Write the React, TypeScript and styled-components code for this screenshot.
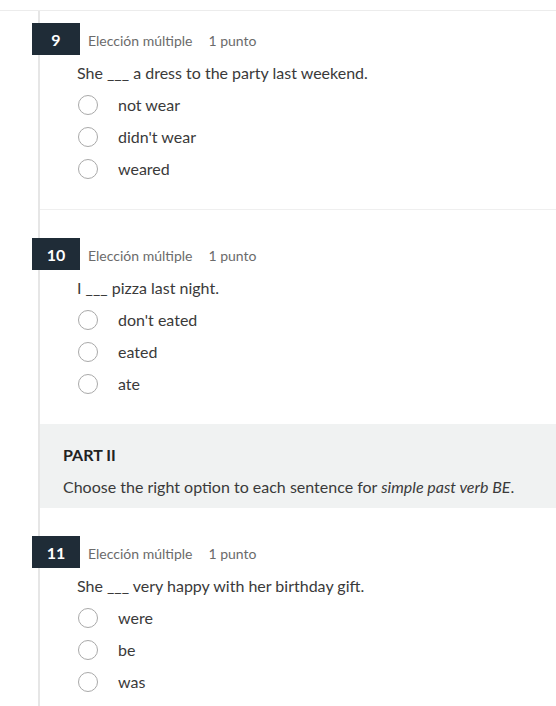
import React from "react";
import styled, { createGlobalStyle } from "styled-components";

const Global = createGlobalStyle`
  html, body { margin: 0; padding: 0; background: #fff; }
  body { font-family: Lato, "Open Sans", sans-serif; color: #333; }
  * { box-sizing: border-box; }
`;

const Page = styled.div`
  width: 556px;
  height: 706px;
  overflow: hidden;
  padding-top: 10px;
`;

const Frame = styled.div`
  border-top: 1px solid #ececec;
  padding-left: 38px;
`;

const Main = styled.div`
  border-left: 2px solid #e6e6e6;
  min-height: 700px;
`;

const Question = styled.section<{ $top: number; $sep?: boolean }>`
  padding: ${(p) => p.$top}px 0 24px 0;
  border-bottom: ${(p) => (p.$sep ? "1px solid #efefef" : "none")};
`;

const Header = styled.div`
  display: flex;
  align-items: center;
  height: 32px;
  margin-left: -8px;
`;

const Badge = styled.div`
  width: 48px;
  height: 32px;
  background: #1f2c37;
  color: #fff;
  font-weight: 700;
  font-size: 16px;
  display: flex;
  align-items: center;
  justify-content: center;
`;

const Meta = styled.span<{ $gap: number }>`
  font-size: 14px;
  color: #6b6b6b;
  margin-left: ${(p) => p.$gap}px;
  padding-top: 3px;
`;

const Prompt = styled.div`
  margin: 6px 0 0 37px;
  font-size: 16px;
  line-height: 24px;
  color: #3a3a3a;
`;

const Options = styled.div`
  margin-top: 4px;
  padding-left: 38px;
`;

const Option = styled.label`
  display: flex;
  align-items: center;
  height: 32px;
  font-size: 16px;
  color: #3a3a3a;
  padding-bottom: 1px;
`;

const Radio = styled.span`
  width: 20px;
  height: 20px;
  border-radius: 50%;
  border: 1px solid #a9a9a9;
  background: #fff;
  margin-right: 20px;
  flex: none;
`;

const Part = styled.div`
  background: #f0f2f2;
  padding: 19px 23px 9px 23px;
`;

const PartTitle = styled.div`
  font-weight: 700;
  font-size: 16px;
  line-height: 24px;
  color: #222;
  margin-bottom: 8px;
`;

const PartText = styled.div`
  font-size: 16px;
  line-height: 24px;
  color: #3a3a3a;
  em { font-style: italic; }
`;

type Q = { n: number; text: string; options: string[]; top: number; sep?: boolean };

const questions: Q[] = [
  { n: 9, text: "She ___ a dress to the party last weekend.", options: ["not wear", "didn't wear", "weared"], top: 12, sep: true },
  { n: 10, text: "I ___ pizza last night.", options: ["don't eated", "eated", "ate"], top: 28 },
];

const q11: Q = { n: 11, text: "She ___ very happy with her birthday gift.", options: ["were", "be", "was"], top: 28 };

function QuestionBlock({ q }: { q: Q }) {
  return (
    <Question $top={q.top} $sep={q.sep}>
      <Header>
        <Badge>{q.n}</Badge>
        <Meta $gap={8}>Elección múltiple</Meta>
        <Meta $gap={16}>1 punto</Meta>
      </Header>
      <Prompt>{q.text}</Prompt>
      <Options>
        {q.options.map((o) => (
          <Option key={o}>
            <Radio />
            {o}
          </Option>
        ))}
      </Options>
    </Question>
  );
}

export default function App() {
  return (
    <Page>
      <Global />
      <Frame>
        <Main>
          {questions.map((q) => (
            <QuestionBlock key={q.n} q={q} />
          ))}
          <Part>
            <PartTitle>PART II</PartTitle>
            <PartText>
              Choose the right option to each sentence for <em>simple past verb BE</em>.
            </PartText>
          </Part>
          <QuestionBlock q={q11} />
        </Main>
      </Frame>
    </Page>
  );
}
